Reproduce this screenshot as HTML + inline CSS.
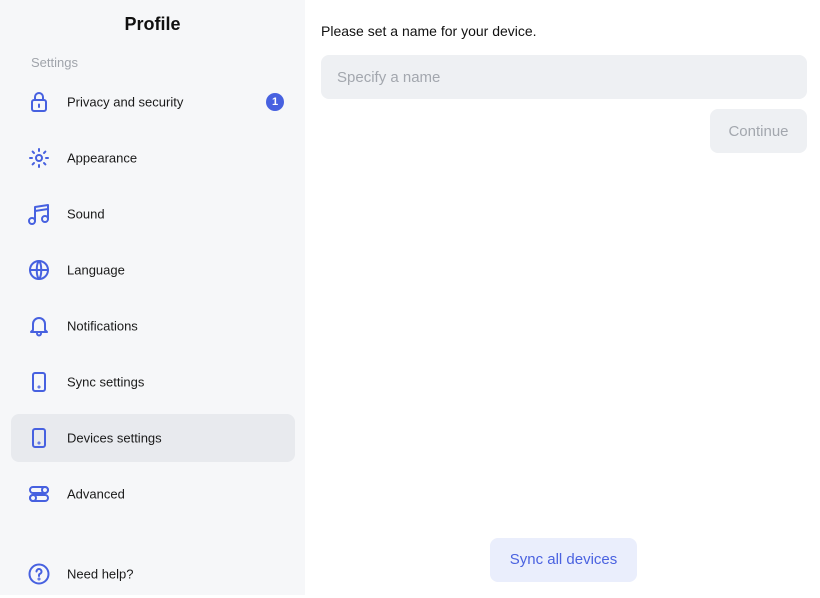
<!DOCTYPE html>
<html><head><style>
*{margin:0;padding:0;box-sizing:border-box}
body{width:820px;height:595px;overflow:hidden;font-family:"Liberation Sans",sans-serif;background:#fff;position:relative}
.side{position:absolute;left:0;top:0;width:305px;height:595px;background:#f6f7f9}
.title{position:absolute;left:0;width:305px;top:14px;text-align:center;font-weight:bold;font-size:18px;color:#111}
.sec{position:absolute;left:31px;top:55px;font-size:13px;color:#a0a4ab}
.item{position:absolute;left:11px;width:284px;height:48px;font-size:13px;color:#1a1a1a}
.item.act{background:#e8eaee;border-radius:8px}
.item span{position:absolute;left:56px;top:50%;transform:translateY(-50%)}
.item svg{position:absolute;left:16px;top:12px;width:24px;height:24px;fill:none;stroke:#4761e0;stroke-width:2;stroke-linecap:round;stroke-linejoin:round}
.badge{position:absolute;left:255px;top:15px;width:18px;height:18px;border-radius:50%;background:#4761e0;color:#fff;font-size:11px;font-weight:bold;text-align:center;line-height:18px}
.p{position:absolute;left:321px;top:23px;font-size:14px;color:#111}
.inp{position:absolute;left:321px;top:55px;width:486px;height:44px;background:#eef0f3;border-radius:8px;font-size:15px;color:#a3a7ae;padding:14px 16px}
.cont{position:absolute;left:710px;top:109px;width:97px;height:44px;background:#eef0f3;border-radius:8px;font-size:15px;color:#a3a7ae;text-align:center;line-height:45px}
.sync{position:absolute;left:490px;top:538px;width:147px;height:44px;background:#eaeefc;border-radius:8px;font-size:15px;color:#4a62e0;text-align:center;line-height:44px}
</style></head><body>
<div class="side">
<div class="title">Profile</div>
<div class="sec">Settings</div>
<div class="item" style="top:78px"><svg viewBox="0 0 24 24"><rect x="5" y="10" width="14" height="11" rx="2"/><path d="M8 10V7a4 4 0 0 1 8 0v3"/><path d="M12 14.5v2.5"/></svg><span>Privacy and security</span><div class="badge">1</div></div>
<div class="item" style="top:134px"><svg viewBox="0 0 24 24"><circle cx="12" cy="12" r="3"/><path d="M12 3v2M12 19v2M3 12h2M19 12h2M5.6 5.6l1.4 1.4M17 17l1.4 1.4M5.6 18.4L7 17M17 7l1.4-1.4"/></svg><span>Appearance</span></div>
<div class="item" style="top:190px"><svg viewBox="0 0 24 24"><path d="M8 19V5l13-2v14"/><circle cx="5" cy="19" r="3"/><circle cx="18" cy="17" r="3"/><path d="M8 9l13-2"/></svg><span>Sound</span></div>
<div class="item" style="top:246px"><svg viewBox="0 0 24 24"><circle cx="12" cy="12" r="9"/><path d="M3 12h18M12 3c3 3 3 15 0 18M12 3c-3 3-3 15 0 18"/></svg><span>Language</span></div>
<div class="item" style="top:302px"><svg viewBox="0 0 24 24"><path d="M6 16V10a6 6 0 0 1 12 0v6l2 2H4z"/><path d="M10 19.5a2 2 0 0 0 4 0"/></svg><span>Notifications</span></div>
<div class="item" style="top:358px"><svg viewBox="0 0 24 24"><rect x="6" y="3" width="12" height="18" rx="2"/><circle cx="12" cy="17" r=".5"/></svg><span>Sync settings</span></div>
<div class="item act" style="top:414px"><svg viewBox="0 0 24 24"><rect x="6" y="3" width="12" height="18" rx="2"/><circle cx="12" cy="17" r=".5"/></svg><span>Devices settings</span></div>
<div class="item" style="top:470px"><svg viewBox="0 0 24 24"><rect x="3" y="5" width="18" height="6" rx="3"/><rect x="3" y="13" width="18" height="6" rx="3"/><circle cx="18" cy="8" r="3"/><circle cx="6" cy="16" r="3"/></svg><span>Advanced</span></div>
<div class="item" style="top:550px"><svg viewBox="0 0 24 24"><circle cx="12" cy="12" r="9.5"/><path d="M9.5 9.5a2.5 2.5 0 1 1 3.5 2.3c-.7.3-1 .9-1 1.6v.6"/><circle cx="12" cy="17" r=".5"/></svg><span>Need help?</span></div>
</div>
<div class="p">Please set a name for your device.</div>
<div class="inp">Specify a name</div>
<div class="cont">Continue</div>
<div class="sync">Sync all devices</div>
</body></html>
